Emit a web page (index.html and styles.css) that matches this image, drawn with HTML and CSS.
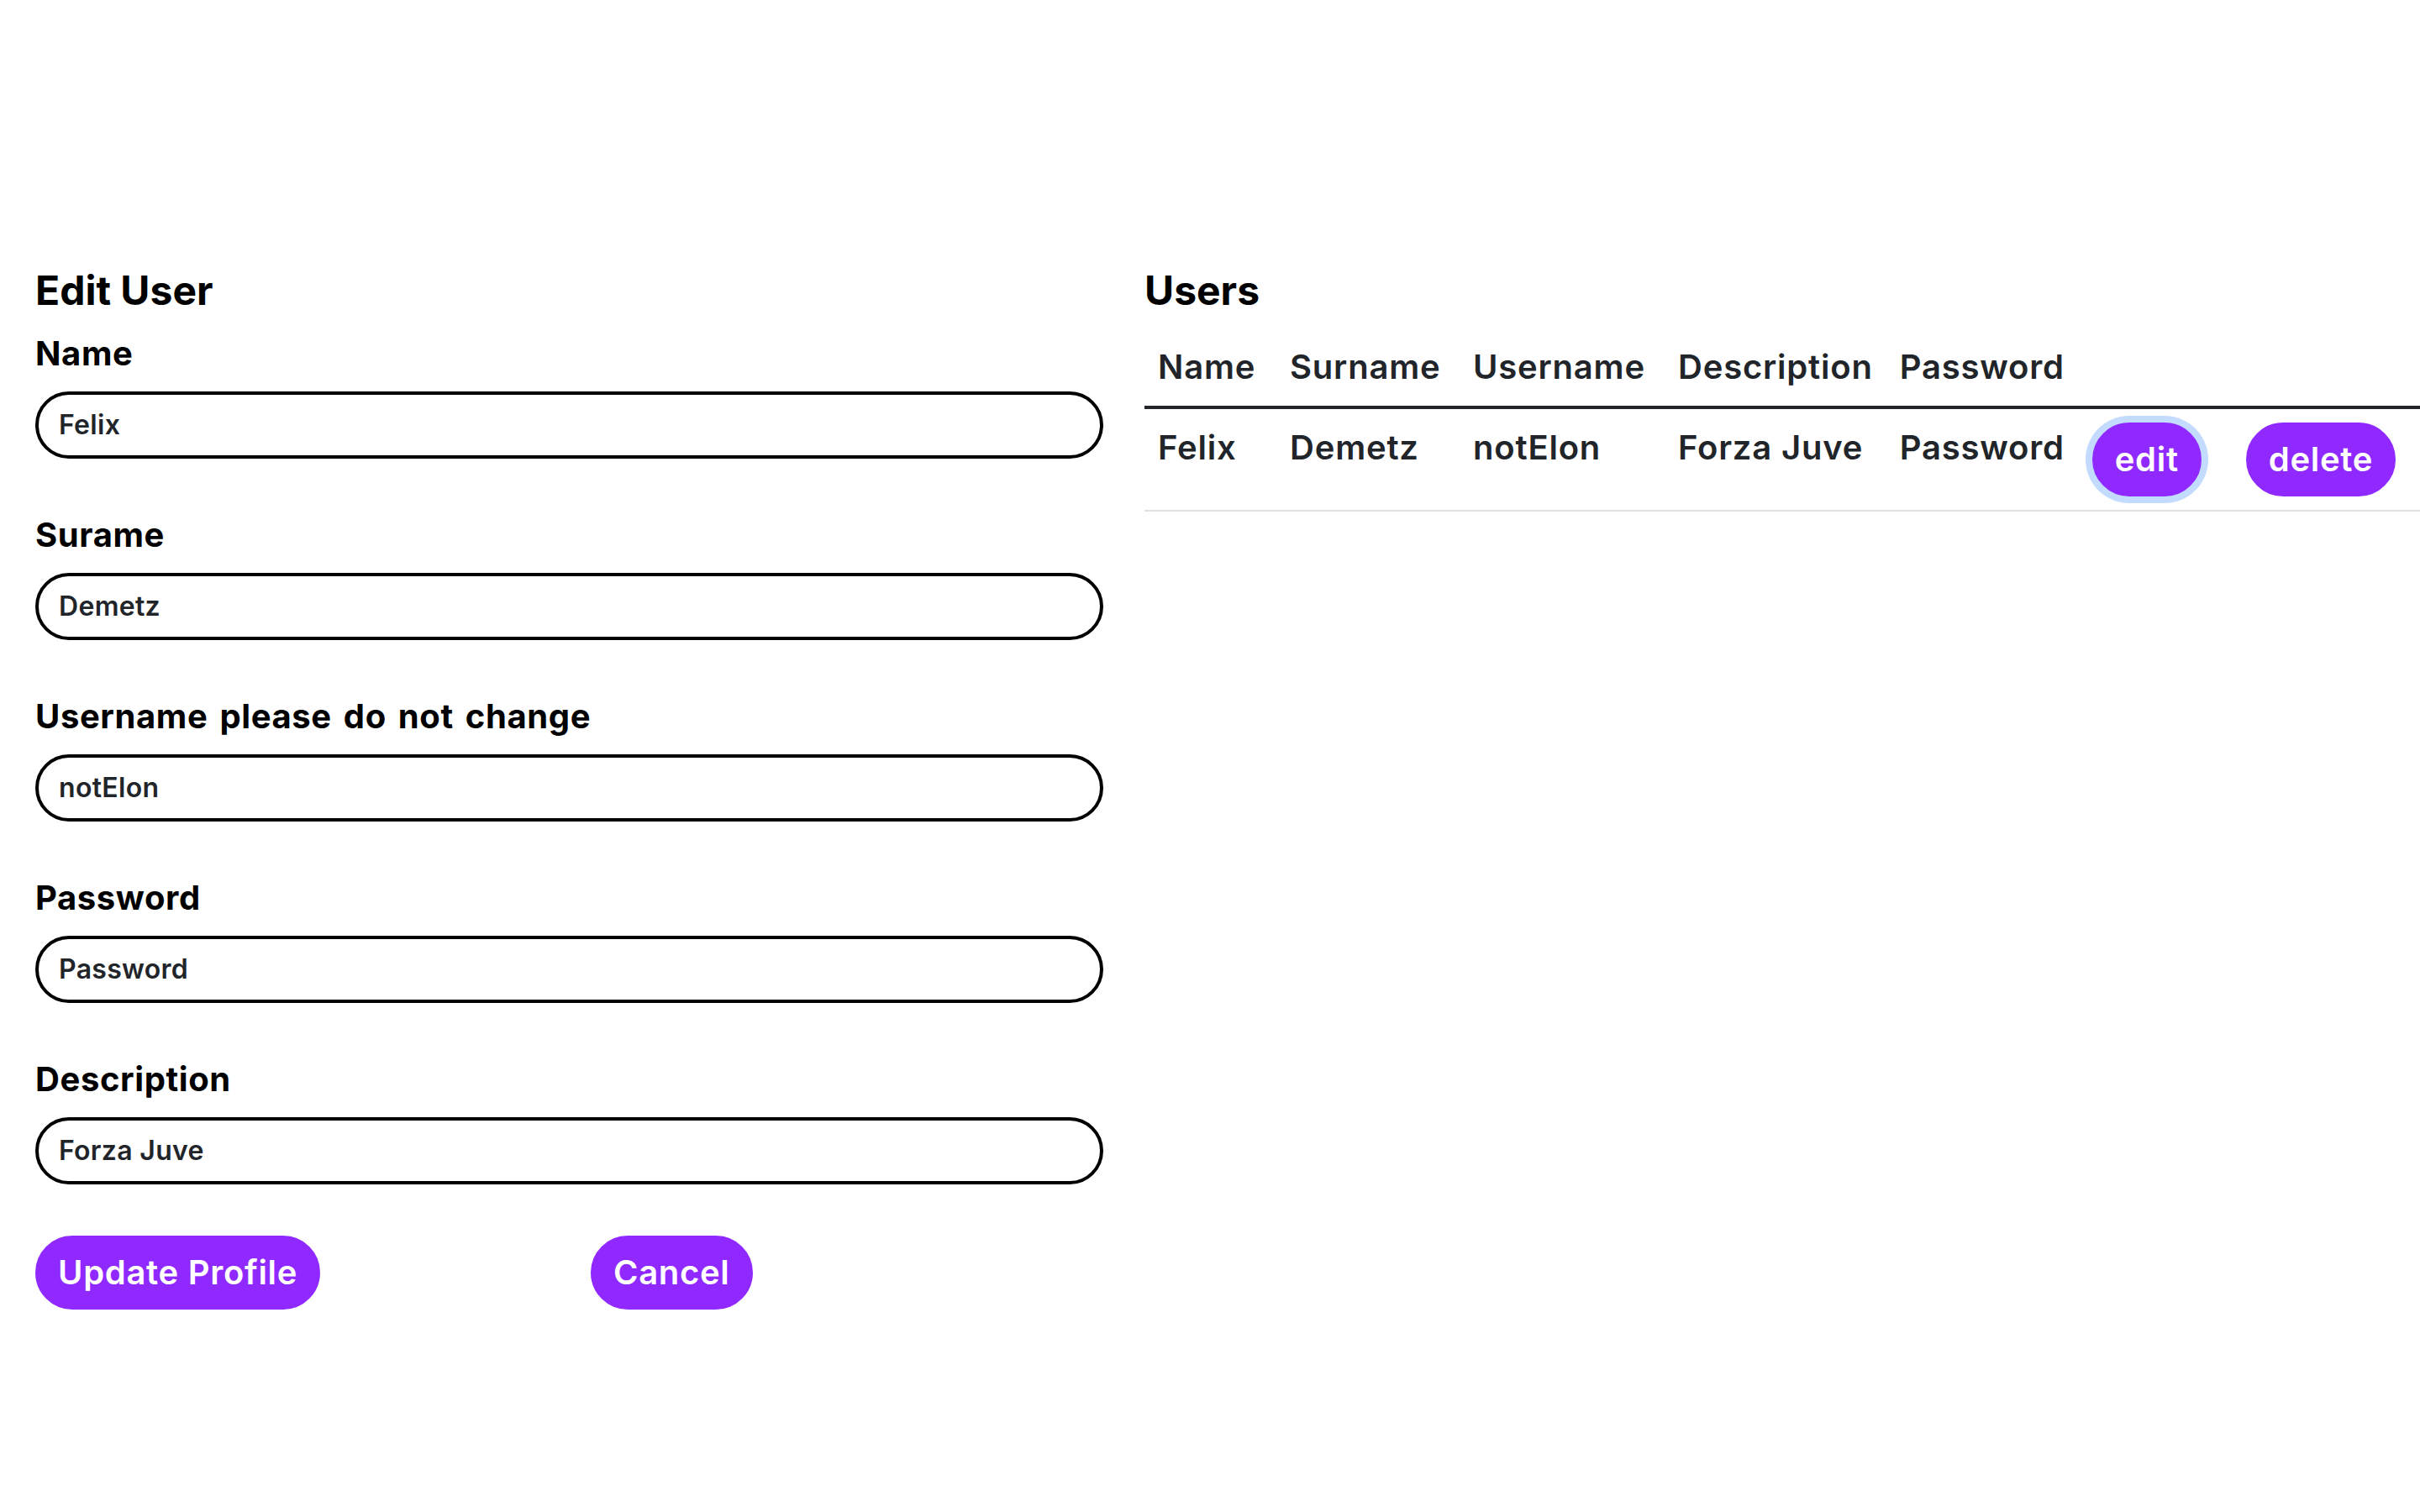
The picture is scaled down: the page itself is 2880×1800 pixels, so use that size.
FILE: index.html
```html
<!DOCTYPE html>
<html lang="en">
<head>
<meta charset="utf-8">
<title>Edit User</title>
<link rel="stylesheet" href="styles.css">
</head>
<body>
<main class="page">
  <section class="edit">
    <h2 class="title">Edit User</h2>
    <form class="form">
      <div class="field">
        <label class="label" for="f-name">Name</label>
        <input class="input" id="f-name" type="text" value="Felix">
      </div>
      <div class="field">
        <label class="label" for="f-surname">Surame</label>
        <input class="input" id="f-surname" type="text" value="Demetz">
      </div>
      <div class="field">
        <label class="label" for="f-username">Username please do not change</label>
        <input class="input" id="f-username" type="text" value="notElon">
      </div>
      <div class="field">
        <label class="label" for="f-password">Password</label>
        <input class="input" id="f-password" type="text" value="Password">
      </div>
      <div class="field">
        <label class="label" for="f-description">Description</label>
        <input class="input" id="f-description" type="text" value="Forza Juve">
      </div>
      <div class="actions">
        <button class="btn" type="button">Update Profile</button>
        <button class="btn" type="button">Cancel</button>
      </div>
    </form>
  </section>
  <section class="users">
    <h2 class="title">Users</h2>
    <table class="table">
      <colgroup>
        <col class="col-name">
        <col class="col-surname">
        <col class="col-username">
        <col class="col-description">
        <col class="col-password">
        <col class="col-edit">
        <col>
      </colgroup>
      <thead>
        <tr>
          <th>Name</th>
          <th>Surname</th>
          <th>Username</th>
          <th>Description</th>
          <th>Password</th>
          <th></th>
          <th></th>
        </tr>
      </thead>
      <tbody>
        <tr>
          <td>Felix</td>
          <td>Demetz</td>
          <td>notElon</td>
          <td>Forza Juve</td>
          <td>Password</td>
          <td><button class="btn btn-focus" type="button">edit</button></td>
          <td><button class="btn" type="button">delete</button></td>
        </tr>
      </tbody>
    </table>
  </section>
</main>
</body>
</html>
```

FILE: styles.css
```css
html, body {
  margin: 0;
  padding: 0;
  background: #ffffff;
}

body {
  font-family: "Inter", "Liberation Sans", sans-serif;
  color: #212529;
}

.page {
  display: grid;
  grid-template-columns: 1271px 1fr;
  column-gap: 49px;
  padding: 317px 0 0 42px;
  box-sizing: border-box;
  width: 2880px;
}

.title {
  margin: 0 0 16px;
  font-size: 48px;
  line-height: 57.6px;
  font-weight: 700;
  color: #000000;
}

.field {
  margin-bottom: 61px;
}

.label {
  display: block;
  font-size: 40px;
  line-height: 60px;
  font-weight: 700;
  letter-spacing: 0.6px;
  word-spacing: 4px;
  color: #000000;
  margin-bottom: 15px;
}

.input {
  display: block;
  box-sizing: border-box;
  width: 100%;
  height: 80px;
  margin: 0;
  padding: 12px 24px;
  border: 4px solid #000000;
  border-radius: 40px;
  background: #ffffff;
  font-family: inherit;
  font-size: 32px;
  line-height: 48px;
  font-weight: 600;
  letter-spacing: 0.3px;
  color: #212529;
  outline: none;
}

.actions {
  display: grid;
  grid-template-columns: 661px auto;
  justify-items: start;
}

.btn {
  box-sizing: border-box;
  height: 88px;
  margin: 0;
  padding: 12px 25px;
  border: 2px solid #9029ff;
  border-radius: 44px;
  background: #9029ff;
  color: #ffffff;
  font-family: inherit;
  font-size: 40px;
  line-height: 60px;
  font-weight: 600;
  letter-spacing: 0.7px;
  white-space: nowrap;
  cursor: pointer;
}

.btn-focus {
  box-shadow: 0 0 0 8px rgba(13, 110, 253, 0.25);
}

.table {
  width: 100%;
  border-collapse: collapse;
  font-size: 40px;
  line-height: 60px;
  font-weight: 600;
  letter-spacing: 0.8px;
  color: #212529;
}

.col-name { width: 157px; }
.col-surname { width: 218px; }
.col-username { width: 244px; }
.col-description { width: 263px; }
.col-password { width: 229px; }
.col-edit { width: 183px; }

.table th,
.table td {
  padding: 16px;
  text-align: left;
  vertical-align: top;
  white-space: nowrap;
}

.table th {
  font-weight: 600;
  border-bottom: 4px solid #212529;
}

.table td {
  border-bottom: 2px solid #dee2e6;
}
```
